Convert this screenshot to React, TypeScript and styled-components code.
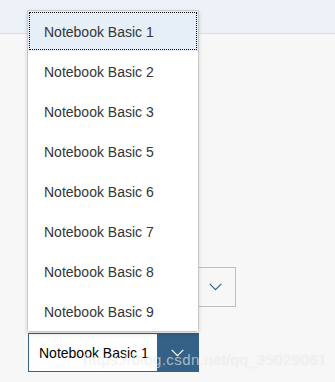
import React from "react";
import styled, { createGlobalStyle } from "styled-components";

const Global = createGlobalStyle`
  html, body { margin: 0; padding: 0; }
  body {
    background: #f7f7f7;
    font-family: "Liberation Sans", Arial, sans-serif;
    width: 335px;
    height: 382px;
    overflow: hidden;
    position: relative;
  }
`;

const Header = styled.header`
  height: 33px;
  background: #edf2f8;
  border-bottom: 1px solid #d6dfe9;
`;

const Main = styled.main`
  display: flex;
  flex-direction: column;
  align-items: flex-start;
  gap: 26px;
  padding: 233px 0 0 28px;
`;

const PlainSelect = styled.div`
  box-sizing: border-box;
  width: 208px;
  height: 40px;
  border: 1px solid #bfbfbf;
  display: flex;
  justify-content: flex-end;
`;

const IconBox = styled.div<{ $active?: boolean }>`
  width: ${(p) => (p.$active ? "41px" : "39px")};
  height: 100%;
  display: flex;
  align-items: center;
  justify-content: center;
  background: ${(p) => (p.$active ? "#346187" : "transparent")};
  color: ${(p) => (p.$active ? "#ffffff" : "#346187")};
`;

const SelectWrap = styled.div`
  position: relative;
`;

const ActiveSelect = styled.div`
  box-sizing: border-box;
  width: 171px;
  height: 39px;
  border: 1px solid #346187;
  background: #fff;
  display: flex;
  align-items: stretch;
`;

const Value = styled.div`
  flex: 1;
  display: flex;
  align-items: center;
  padding-left: 10px;
  font-size: 14px;
  color: #000;
  white-space: nowrap;
`;

const List = styled.ul`
  position: absolute;
  left: -1px;
  bottom: calc(100% + 1px);
  box-sizing: border-box;
  width: 172px;
  margin: 0;
  padding: 0;
  list-style: none;
  background: #fff;
  border: 1px solid #c8c8c8;
  border-radius: 0 0 3px 3px;
  box-shadow: 0 2px 4px rgba(0, 0, 0, 0.15);
`;

const Item = styled.li<{ $selected?: boolean }>`
  height: 40px;
  display: flex;
  align-items: center;
  padding: 2px 0 0 16px;
  box-sizing: border-box;
  font-size: 14px;
  color: #32363a;
  background: ${(p) => (p.$selected ? "#e6eef7" : "#fff")};
  outline: ${(p) => (p.$selected ? "1px dotted #000" : "none")};
  outline-offset: -2px;
`;

const Watermark = styled.div`
  position: absolute;
  right: 8px;
  top: 351px;
  font-family: "Liberation Sans", Arial, sans-serif;
  font-size: 15px;
  letter-spacing: 0.4px;
  color: rgba(255, 255, 255, 0.6);
  text-shadow: 0 0 1px rgba(0, 0, 0, 0.12);
  pointer-events: none;
  white-space: nowrap;
`;

const Chevron = ({ color }: { color: string }) => (
  <svg width="13" height="8" viewBox="0 0 13 8">
    <path d="M0.7 0.8 L6.5 6.6 L12.3 0.8" fill="none" stroke={color} strokeWidth="1.2" />
  </svg>
);

const items = [1, 2, 3, 5, 6, 7, 8, 9];

export default function App() {
  return (
    <>
      <Global />
      <Header />
      <Main>
        <PlainSelect>
          <IconBox>
            <Chevron color="#346187" />
          </IconBox>
        </PlainSelect>
        <SelectWrap>
          <ActiveSelect>
            <Value>Notebook Basic 1</Value>
            <IconBox $active>
              <Chevron color="#ffffff" />
            </IconBox>
          </ActiveSelect>
          <List>
            {items.map((n, i) => (
              <Item key={n} $selected={i === 0}>
                Notebook Basic {n}
              </Item>
            ))}
          </List>
        </SelectWrap>
      </Main>
      <Watermark>https://blog.csdn.net/qq_35029061</Watermark>
    </>
  );
}
